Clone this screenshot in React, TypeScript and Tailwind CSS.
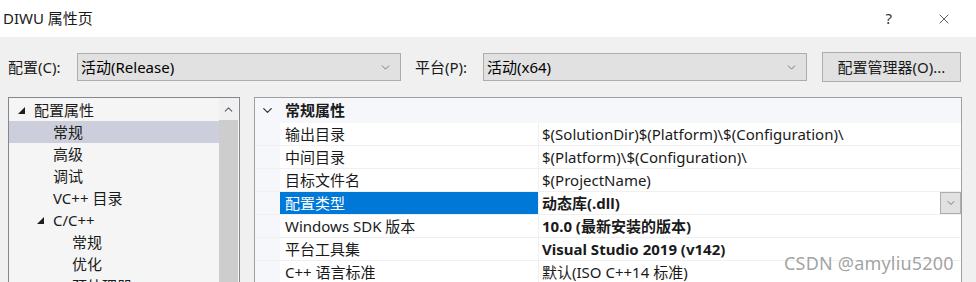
import { ChevronDown, ChevronUp, X } from 'lucide-react';

const font = "font-['Noto_Sans','Noto_Sans_CJK_SC',sans-serif]";

const Tri = ({ className = '' }: { className?: string }) => (
  <svg className={className} width="8" height="8" viewBox="0 0 8 8">
    <polygon points="7,0 7,7 0,7" fill="#1e1e1e" />
  </svg>
);

const Dropdown = ({ value }: { value: string }) => (
  <div className="w-[324px] h-[28px] bg-[#e1e1e1] border border-[#adadad] flex items-center pl-[3px] pr-[8px]">
    <span className="flex-1 text-[15px] text-black leading-none">{value}</span>
    <ChevronDown size={13} strokeWidth={1.2} className="text-[#444]" />
  </div>
);

const treeRows = [
  { label: '配置属性', level: 0, open: true },
  { label: '常规', level: 1, selected: true },
  { label: '高级', level: 1 },
  { label: '调试', level: 1 },
  { label: 'VC++ 目录', level: 1 },
  { label: 'C/C++', level: 1, open: true },
  { label: '常规', level: 2 },
  { label: '优化', level: 2 },
  { label: '预处理器', level: 2 },
];

const props = [
  { name: '输出目录', value: '$(SolutionDir)$(Platform)\\$(Configuration)\\' },
  { name: '中间目录', value: '$(Platform)\\$(Configuration)\\' },
  { name: '目标文件名', value: '$(ProjectName)' },
  { name: '配置类型', value: '动态库(.dll)', bold: true, selected: true },
  { name: 'Windows SDK 版本', value: '10.0 (最新安装的版本)', bold: true },
  { name: '平台工具集', value: 'Visual Studio 2019 (v142)', bold: true },
  { name: 'C++ 语言标准', value: '默认(ISO C++14 标准)' },
];

export default function App() {
  return (
    <div className={`relative w-[976px] h-[282px] overflow-hidden bg-[#f0f0f0] text-[#1a1a1a] ${font}`}>
      {/* title bar */}
      <div className="h-[37px] bg-white flex items-center pl-[3px] pr-[24px]">
        <span className="flex-1 text-[15px]">DIWU 属性页</span>
        <span className="text-[15px] text-[#333] mr-[44px]">?</span>
        <X size={16} strokeWidth={1.1} className="text-[#222]" />
      </div>

      {/* configuration row */}
      <div className="h-[60px] flex items-center pl-[8px] text-[15px]">
        <span className="w-[69px]">配置(C):</span>
        <Dropdown value="活动(Release)" />
        <span className="ml-[14px] w-[68px]">平台(P):</span>
        <Dropdown value="活动(x64)" />
        <div className="ml-[15px] w-[139px] h-[30px] bg-[#e1e1e1] border border-[#adadad] flex items-center justify-center">
          配置管理器(O)...
        </div>
      </div>

      {/* panels */}
      <div className="flex pl-[8px] gap-[14px]">
        {/* tree */}
        <div className="w-[232px] h-[200px] border border-[#828790] bg-[#f5f5f5] flex">
          <div className="flex-1 pt-[1px] text-[15px]">
            {treeRows.map((r, i) => (
              <div
                key={i}
                className={`h-[22px] flex items-center ${r.selected ? 'bg-[#cccedb]' : ''}`}
              >
                <div
                  className={`flex items-center justify-end shrink-0 ${
                    r.level === 0 ? 'w-[25px]' : r.level === 1 ? 'w-[44px]' : 'w-[63px]'
                  }`}
                >
                  {r.open && <Tri className="mr-[8px] mt-[1px]" />}
                </div>
                <span>{r.label}</span>
              </div>
            ))}
          </div>
          <div className="w-[19px] mr-[1px] flex flex-col bg-[#f0f0f0]">
            <div className="h-[22px] flex items-center justify-center">
              <ChevronUp size={13} strokeWidth={2} className="text-[#606060]" />
            </div>
            <div className="flex-1 bg-[#cdcdcd]" />
          </div>
        </div>

        {/* property grid */}
        <div className="w-[708px] h-[200px] border border-[#a0a0a0] bg-[#f5f7fb]">
          <div className="h-[25px] flex items-center">
            <div className="w-[25px] flex justify-center">
              <ChevronDown size={15} strokeWidth={2.2} className="text-[#3c3c3c]" />
            </div>
            <span className="text-[15px] font-bold pl-[5px]">常规属性</span>
          </div>
          {props.map((p, i) => (
            <div key={i} className="flex h-[23px] border-b border-[#f0f0f0]">
              <div className="w-[25px] shrink-0" />
              <div
                className={`w-[259px] shrink-0 flex items-center pl-[5px] text-[15px] border-r border-[#f0f0f0] ${
                  p.selected ? 'bg-[#0078d7] text-white' : 'bg-white'
                }`}
              >
                {p.name}
              </div>
              <div className="flex-1 flex items-center bg-white pl-[3px] text-[15px]">
                <span className={`flex-1 ${p.bold ? 'font-bold' : ''}`}>{p.value}</span>
                {p.selected && (
                  <div className="w-[21px] h-[22px] bg-[#e1e1e1] border border-[#adadad] flex items-center justify-center">
                    <ChevronDown size={12} strokeWidth={1.3} className="text-[#444]" />
                  </div>
                )}
              </div>
            </div>
          ))}
        </div>
      </div>

      {/* watermark */}
      <div className="absolute left-[784px] top-[250px] text-[18px] text-[#8a8a8a]/80 tracking-[0.2px]">
        CSDN @amyliu5200
      </div>
    </div>
  );
}
